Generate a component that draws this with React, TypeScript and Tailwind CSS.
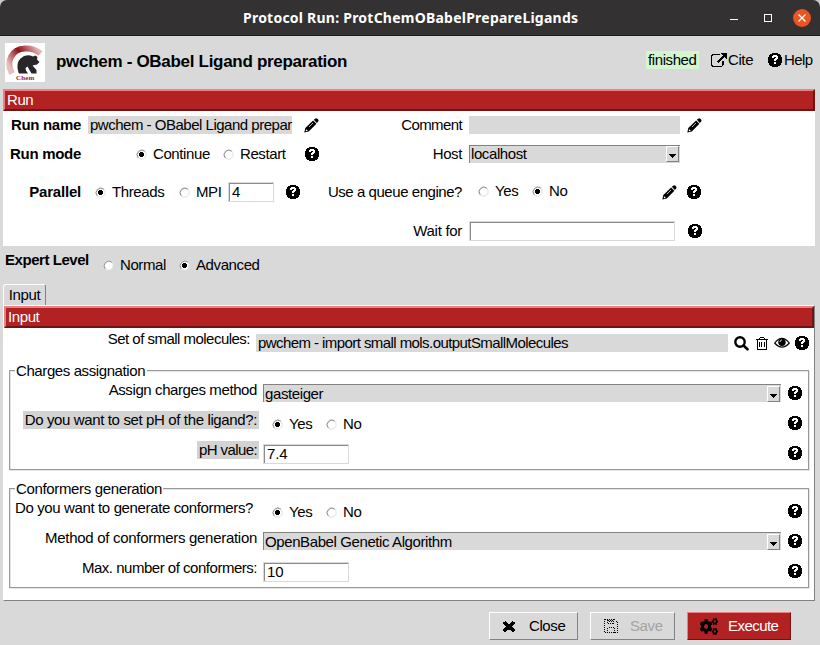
import React from "react";
import { FaCogs } from "react-icons/fa";

function HelpIcon() {
  return (
    <svg viewBox="0 0 14 14" shapeRendering="crispEdges" className="h-[14px] w-[14px] shrink-0" fill="black">
      <path d="M4 0h6v1h2v1h1v2h1v6h-1v2h-1v1h-2v1H4v-1H2v-1H1v-2H0V4h1V2h1V1h2z" />
      <path d="M5 2h4v1h1v3H9v1H8v1H6V6h1V5h1V4H6v1H4V3h1zM6 9h2v2H6z" fill="white" />
    </svg>
  );
}

function PencilIcon() {
  return (
    <svg viewBox="0 0 15 15" className="h-[15px] w-[15px] shrink-0">
      <path d="M9.800 1.800 L11.500 0.400 Q12.500 -0.100 13.700 1 Q15 2.300 14.200 3.500 L12.900 5 Z M9.100 2.400 L12.400 5.800 L4.800 13.400 L0.300 14.600 L1.300 10.100 Z" />
      <path d="M5 9 L9 5" stroke="white" strokeWidth="0.700" />
      <path d="M2.200 11.200 L3.900 12.900 L2.400 13.300 L1.700 12.600 Z" fill="white" />
    </svg>
  );
}

function LinkIcon() {
  return (
    <svg viewBox="0 0 1792 1536" preserveAspectRatio="none" shapeRendering="crispEdges" className="h-[14px] w-4 shrink-0">
      <path d="M1408 928v320q0 119-84.5 203.5t-203.5 84.5h-832q-119 0-203.5-84.5t-84.5-203.5v-832q0-119 84.5-203.5t203.5-84.5h704q14 0 23 9t9 23v64q0 14-9 23t-23 9h-704q-66 0-113 47t-47 113v832q0 66 47 113t113 47h832q66 0 113-47t47-113v-320q0-14 9-23t23-9h64q14 0 23 9t9 23zm384-864v512q0 26-19 45t-45 19-45-19l-176-176-652 652q-10 10-23 10t-23-10l-114-114q-10-10-10-23t10-23l652-652-176-176q-19-19-19-45t19-45 45-19h512q26 0 45 19t19 45z" />
    </svg>
  );
}

function SearchIcon() {
  return (
    <svg viewBox="0 0 15 15" className="h-[15px] w-[15px]">
      <circle cx="6" cy="6" r="4.700" fill="none" stroke="black" strokeWidth="2.400" />
      <path d="M9.500 9.500 L13.500 13.300" stroke="black" strokeWidth="2.600" strokeLinecap="round" />
    </svg>
  );
}

function TrashIcon() {
  return (
    <svg viewBox="0 0 12 13" shapeRendering="crispEdges" className="h-[13px] w-3" fill="black">
      <path d="M4 0h4v1h1v1h3v1h-1v10H1V3H0V2h3V1h1zM4 1v1h4V1zM2 3v9h8V3zM3 5h1v5H3zM5 5h1v5H5zM8 5h1v5H8z" fillRule="evenodd" />
    </svg>
  );
}

function EyeIcon() {
  return (
    <svg viewBox="0 0 16 12" className="h-3 w-4">
      <path d="M0.700 6 Q8 -3.200 15.300 6 Q8 14.200 0.700 6Z" fill="white" stroke="black" strokeWidth="1.200" />
      <circle cx="8" cy="5.200" r="3.700" />
      <path d="M6 5 Q6 3 8 2.800" fill="none" stroke="white" strokeWidth="0.800" />
    </svg>
  );
}

function Radio({ on, label, width }: { on?: boolean; label: string; width: string }) {
  return (
    <div className={`flex h-5 shrink-0 items-center gap-[6px] ${width}`}>
      <svg viewBox="0 0 11 11" className="h-[11px] w-[11px] shrink-0">
        <circle cx="5.500" cy="5.500" r="4.700" fill="white" stroke="#dedede" />
        <path d="M2.200 8.800A4.700 4.700 0 0 1 8.800 2.200" fill="none" stroke="#8c8c8c" />
        {on && <path d="M4 3h3v1h1v3H7v1H4V7H3V4h1z" shapeRendering="crispEdges" />}
      </svg>
      <span>{label}</span>
    </div>
  );
}

function Combo({ text, width }: { text: string; width: string }) {
  return (
    <div className={`flex h-[18px] shrink-0 items-center border-t border-l border-[#828282] bg-[#d9d9d9] pl-px ${width}`}>
      <span className="grow">{text}</span>
      <span className="mr-px flex h-4 w-[13px] items-end justify-center border border-t-white border-l-white border-r-[#828282] border-b-[#828282] pb-[3px]">
        <svg viewBox="0 0 7 4" shapeRendering="crispEdges" className="h-1 w-[7px]"><path d="M0 0h7v1H6v1H5v1H4v1H3V3H2V2H1V1H0z" /></svg>
      </span>
    </div>
  );
}

function Entry({ text, width }: { text?: string; width: string }) {
  return (
    <div className={`h-5 shrink-0 border border-[#d9d9d9] ${width}`}>
      <div className="flex h-[18px] items-center border-t border-l border-[#8c8c8c] pb-px pl-[2px] tracking-[-0.1px]">{text}</div>
    </div>
  );
}

function Banner({ text }: { text: string }) {
  return (
    <div className="flex h-[22px] items-center border-2 border-t-[#f08080] border-l-[#f08080] border-r-[#6e1414] border-b-[#6e1414] bg-[#b22222] pl-[2px] text-white">
      {text}
    </div>
  );
}

function Group({ title, titleWidth, children }: { title: string; titleWidth: string; children: React.ReactNode }) {
  return (
    <div className="ml-[5px] h-[100px] w-[800px] border border-[#999] shadow-[inset_1px_1px_#e4e4e4,1px_1px_#e4e4e4]">
      <div className={`-mt-[10px] ml-[5px] h-5 bg-white pl-px leading-5 ${titleWidth}`}>{title}</div>
      {children}
    </div>
  );
}

function Logo() {
  return (
    <svg viewBox="0 0 40 39" className="h-[39px] w-10 shrink-0">
      <defs>
        <linearGradient id="arc" x1="0" x2="1" y1="0.700" y2="0.200">
          <stop offset="0" stopColor="#e6bfbf" />
          <stop offset="0.480" stopColor="#8e1216" />
          <stop offset="1" stopColor="#e2b5b5" />
        </linearGradient>
      </defs>
      <rect width="40" height="39" fill="white" />
      <path d="M7 30.500 C0.500 19 6.500 6 20 5.500 Q29 5 35.500 10.500" fill="none" stroke="url(#arc)" strokeWidth="6" />
      <path d="M13.500 29.500 Q10.500 20 15.500 15.500 Q21 10 28 13.500 L30.500 12.500 L32.500 14 L32 16.500 L34.500 19 L32 21.500 L27.500 22.500 L31.500 27 L31.500 30.500 L26.500 30.500 L22.500 23.500 L20.500 25 L21 27.500 L23 30.500 L14 30.500 Z" fill="#272729" />
      <text x="11" y="37" textLength="18" fontSize="7" fontWeight="bold" fontFamily="Liberation Serif" fill="#b12025">Chem</text>
    </svg>
  );
}

export default function App() {
  return (
    <div className="flex h-[645px] w-[820px] flex-col overflow-hidden bg-[#d9d9d9] font-['Liberation_Sans',sans-serif] text-[15px] leading-[18px] tracking-[-0.4px] whitespace-pre text-black">
      <div className="bg-[#c9c9c9]">
        <header className="flex h-9 items-center rounded-t-[7px] border-b border-[#1d1b1c] bg-[#333132] font-['Noto_Sans',sans-serif] text-[14px] font-bold text-white">
          <span className="ml-[243px] w-[487px] tracking-[0.23px]">Protocol Run: ProtChemOBabelPrepareLigands</span>
          <span className="mt-1 h-px w-2 bg-white" />
          <span className="ml-[26px] h-2 w-2 border border-white" />
          <svg viewBox="0 0 18 18" className="ml-[21px] h-[18px] w-[18px]"><circle cx="9" cy="9" r="9" fill="#e95420" /><path d="M5.500 5.500l7 7m0-7l-7 7" stroke="white" strokeWidth="1.300" /></svg>
        </header>
      </div>

      <div className="flex h-[53px] shrink-0 items-center pl-[5px]">
        <Logo />
        <h1 className="mb-[2px] ml-[11px] w-[590px] text-[17px] font-bold tracking-[-0.3px]">pwchem - OBabel Ligand preparation</h1>
        <span className="mb-[5px] w-[53px] bg-[#d3f5d0] pl-[2px]">finished</span>
        <span className="mb-[5px] ml-3 flex w-[57px] items-center"><LinkIcon /><span className="pl-px">Cite</span></span>
        <span className="mb-[5px] flex items-center gap-[2px] tracking-[-0.6px]"><HelpIcon />Help</span>
      </div>

      <section className="ml-[3px] w-[812px] shrink-0">
        <Banner text="Run" />
        <div className="h-[135px] bg-white pt-[5px]">
          <div className="flex h-[18px] items-center">
            <b className="w-[78px] text-right tracking-[-0.3px]">Run name</b>
            <span className="ml-[7px] w-[204px] shrink-0 bg-[#d9d9d9] pl-[2px] tracking-[-0.49px]">pwchem - OBabel Ligand prepar</span>
            <span className="ml-3 w-[15px] shrink-0"><PencilIcon /></span>
            <span className="w-[143px] shrink-0 text-right tracking-[-0.6px]">Comment</span>
            <span className="ml-[7px] h-[18px] w-[211px] shrink-0 bg-[#d9d9d9]" />
            <span className="ml-[7px]"><PencilIcon /></span>
          </div>
          <div className="mt-[11px] flex h-[18px] items-center">
            <b className="w-[78px] text-right tracking-[-0.3px]">Run mode</b>
            <Radio on label="Continue" width="ml-[55px] w-[87px]" />
            <Radio label="Restart" width="w-[82px]" />
            <HelpIcon />
            <span className="w-[143px] text-right">Host</span>
            <span className="mb-px ml-[7px]"><Combo text="localhost" width="w-[211px]" /></span>
          </div>
          <div className="mt-[19px] flex h-5 items-center">
            <b className="w-[78px] text-right tracking-[-0.2px]">Parallel</b>
            <Radio on label="Threads" width="ml-[14px] w-[84px]" />
            <Radio label="MPI" width="w-[49px]" />
            <Entry text="4" width="w-[46px]" />
            <span className="ml-3"><HelpIcon /></span>
            <span className="w-[162px] text-right tracking-[-0.45px]">Use a queue engine?</span>
            <Radio label="Yes" width="ml-[16px] mb-[2px] w-[54px]" />
            <Radio on label="No" width="mb-[2px] w-[130px]" />
            <PencilIcon />
            <span className="ml-[10px]"><HelpIcon /></span>
          </div>
          <div className="mt-[19px] flex h-5 items-center">
            <span className="w-[459px] text-right tracking-[-0.3px]">Wait for</span>
            <Entry width="ml-[7px] w-[206px]" />
            <span className="ml-[13px]"><HelpIcon /></span>
          </div>
        </div>
      </section>

      <div className="flex h-[38px] shrink-0 items-center pl-[5px]">
        <b className="mb-[10px] w-[98px] tracking-[-0.45px]">Expert Level</b>
        <Radio label="Normal" width="w-[76px]" />
        <Radio on label="Advanced" width="w-[90px]" />
      </div>

      <div className="ml-[3px] flex h-[21px] w-[43px] shrink-0 items-center justify-center rounded-t-[3px] border-t border-r border-l border-t-white border-r-[#828282] border-l-white">Input</div>
      <section className="ml-[3px] h-[296px] w-[812px] shrink-0 border border-t-white border-r-[#828282] border-b-[#828282] border-l-white bg-white">
        <Banner text="Input" />
        <div className="flex h-[42px] pt-[6px]">
          <span className="mt-[-4px] w-[246px] text-right tracking-[-0.52px]">Set of small molecules:</span>
          <span className="ml-[6px] h-[18px] w-[472px] bg-[#d9d9d9] pl-[2px] tracking-[-0.57px]">pwchem - import small mols.outputSmallMolecules</span>
          <span className="ml-[6px] flex h-[18px] items-center">
            <span className="mr-[7px]"><SearchIcon /></span>
            <span className="mr-[6px]"><TrashIcon /></span>
            <span className="mr-[5px]"><EyeIcon /></span>
            <HelpIcon />
          </span>
        </div>
        <Group title="Charges assignation" titleWidth="w-[132px]">
          <div className="-mt-[1px] flex h-[30px]">
            <span className="mt-px w-[247px] text-right">Assign charges method</span>
            <span className="mt-[4px] ml-[6px]"><Combo text="gasteiger" width="w-[518px]" /></span>
            <span className="mt-[6px] ml-[7px]"><HelpIcon /></span>
          </div>
          <div className="flex h-[30px]">
            <span className="flex w-[249px] justify-end"><span className="mt-px h-[18px] bg-[#d3d3d3] px-[2px] tracking-[-0.37px]">Do you want to set pH of the ligand?:</span></span>
            <Radio on label="Yes" width="mt-[4px] ml-[13px] w-[54px]" />
            <Radio label="No" width="mt-[4px] w-[462px]" />
            <span className="mt-[6px]"><HelpIcon /></span>
          </div>
          <div className="flex h-[30px]">
            <span className="flex w-[249px] justify-end"><span className="mt-px h-[18px] bg-[#d3d3d3] px-[2px] tracking-[-0.6px]">pH value:</span></span>
            <Entry text="7.4" width="mt-[4px] ml-1 w-[86px]" />
            <span className="mt-[6px] ml-[439px]"><HelpIcon /></span>
          </div>
        </Group>
        <div className="mt-[18px]">
          <Group title="Conformers generation" titleWidth="w-[148px] tracking-[-0.35px]">
            <div className="-mt-[1px] flex h-[30px]">
              <span className="mt-px w-[243px] text-right tracking-[-0.37px]">Do you want to generate conformers?</span>
              <Radio on label="Yes" width="mt-[4px] ml-[19px] w-[54px]" />
              <Radio label="No" width="mt-[4px] w-[462px]" />
              <span className="mt-[6px]"><HelpIcon /></span>
            </div>
            <div className="flex h-[30px]">
              <span className="mt-px w-[247px] text-right tracking-[-0.29px]">Method of conformers generation</span>
              <span className="mt-[4px] ml-[6px]"><Combo text="OpenBabel Genetic Algorithm" width="w-[518px]" /></span>
              <span className="mt-[6px] ml-[7px]"><HelpIcon /></span>
            </div>
            <div className="flex h-[30px]">
              <span className="mt-px w-[247px] text-right tracking-[-0.48px]">Max. number of conformers:</span>
              <Entry text="10" width="mt-[4px] ml-[6px] w-[86px]" />
              <span className="mt-[6px] ml-[439px]"><HelpIcon /></span>
            </div>
          </Group>
        </div>
      </section>

      <footer className="mt-[11px] ml-[489px] flex h-7 shrink-0">
        <button className="flex w-[89px] items-center border border-t-white border-l-white border-r-[#828282] border-b-[#828282] pl-[13px]">
          <svg viewBox="302 238 1188 1316" preserveAspectRatio="none" shapeRendering="crispEdges" className="mr-[14px] h-3 w-3"><path d="M1490 1322q0 40-28 68l-136 136q-28 28-68 28t-68-28l-294-294-294 294q-28 28-68 28t-68-28l-136-136q-28-28-28-68t28-68l294-294-294-294q-28-28-28-68t28-68l136-136q28-28 68-28t68 28l294 294 294-294q28-28 68-28t68 28l136 136q28 28 28 68t-28 68l-294 294 294 294q28 28 28 68z" /></svg>
          Close
        </button>
        <button className="ml-3 flex w-[85px] items-center border border-t-white border-l-white border-r-[#828282] border-b-[#828282] pl-[13px] text-[#a3a3a3]">
          <svg viewBox="0 0 14 14" shapeRendering="crispEdges" className="mr-3 h-[14px] w-[14px]" fill="none" stroke="black" strokeDasharray="1 1"><path d="M.5 .5H10.500L13.500 3.500V13.500H.5zM3.500 .5V4.500H9.500V.5M3.500 13.500V8.500H10.500V13.500M4 1.500h5M5 2.500h4" /></svg>
          Save
        </button>
        <button className="ml-3 flex w-[104px] items-center border border-t-[#f08080] border-l-[#f08080] border-r-[#6e1414] border-b-[#6e1414] bg-[#b22222] pl-3 tracking-[-0.55px] text-white">
          <FaCogs preserveAspectRatio="none" className="mr-[10px] h-[17px] w-[18px] shrink-0 text-black" />
          Execute
        </button>
      </footer>
    </div>
  );
}
